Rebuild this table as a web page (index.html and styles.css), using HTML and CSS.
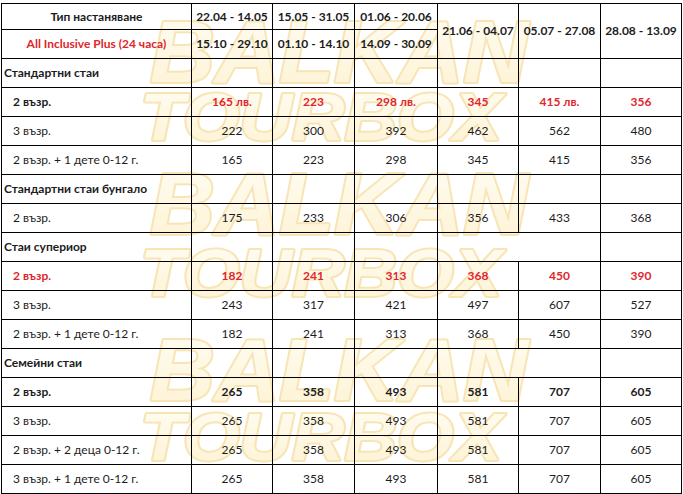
FILE: index.html
```html
<!DOCTYPE html>
<html lang="bg">
<head>
<meta charset="utf-8">
<title>Цени</title>
<link rel="stylesheet" href="styles.css">
</head>
<body>
<div class="sheet">
  <svg class="watermark" width="683" height="494" viewBox="0 0 683 494" aria-hidden="true">
    <defs>
      <linearGradient id="wm" x1="0" y1="0" x2="0" y2="1">
        <stop offset="0" stop-color="#fffdf4"/>
        <stop offset="1" stop-color="#fdf2d2"/>
      </linearGradient>
    </defs>
    <g class="wm-text">
      <text class="wm-big" x="150" y="82" textLength="378" lengthAdjust="spacingAndGlyphs">BALKAN</text>
      <text class="wm-small" x="140" y="140" textLength="362" lengthAdjust="spacingAndGlyphs">TOURBOX</text>
      <text class="wm-big" x="150" y="234" textLength="378" lengthAdjust="spacingAndGlyphs">BALKAN</text>
      <text class="wm-small" x="140" y="296" textLength="362" lengthAdjust="spacingAndGlyphs">TOURBOX</text>
      <text class="wm-big" x="150" y="400" textLength="378" lengthAdjust="spacingAndGlyphs">BALKAN</text>
      <text class="wm-small" x="140" y="460" textLength="362" lengthAdjust="spacingAndGlyphs">TOURBOX</text>
    </g>
  </svg>

  <table class="prices">
    <colgroup>
      <col class="c-label">
      <col class="c-81">
      <col class="c-82">
      <col class="c-83">
      <col class="c-81">
      <col class="c-82">
      <col class="c-81">
    </colgroup>
    <tr class="head-1">
      <th class="head-label">Тип настаняване</th>
      <th>22.04 - 14.05</th>
      <th>15.05 - 31.05</th>
      <th>01.06 - 20.06</th>
      <th rowspan="2">21.06 - 04.07</th>
      <th rowspan="2">05.07 - 27.08</th>
      <th rowspan="2">28.08 - 13.09</th>
    </tr>
    <tr>
      <th class="head-label red">All Inclusive Plus (24 часа)</th>
      <th>15.10 - 29.10</th>
      <th>01.10 - 14.10</th>
      <th>14.09 - 30.09</th>
    </tr>

    <tr class="section">
      <td class="sec-label">Стандартни стаи</td><td></td><td></td><td></td><td></td><td></td><td></td>
    </tr>
    <tr class="hl-red">
      <td class="sub-label bold">2 възр.</td><td>165 лв.</td><td>223</td><td>298 лв.</td><td>345</td><td>415 лв.</td><td>356</td>
    </tr>
    <tr>
      <td class="sub-label">3 възр.</td><td>222</td><td>300</td><td>392</td><td>462</td><td>562</td><td>480</td>
    </tr>
    <tr>
      <td class="sub-label">2 възр. + 1 дете 0-12 г.</td><td>165</td><td>223</td><td>298</td><td>345</td><td>415</td><td>356</td>
    </tr>

    <tr class="section">
      <td class="sec-label">Стандартни стаи бунгало</td><td></td><td></td><td></td><td></td><td></td><td></td>
    </tr>
    <tr>
      <td class="sub-label">2 възр.</td><td>175</td><td>233</td><td>306</td><td>356</td><td>433</td><td>368</td>
    </tr>

    <tr class="section">
      <td class="sec-label">Стаи супериор</td><td></td><td></td><td></td><td colspan="2"></td><td></td>
    </tr>
    <tr class="hl-red all-red">
      <td class="sub-label">2 възр.</td><td>182</td><td>241</td><td>313</td><td>368</td><td>450</td><td>390</td>
    </tr>
    <tr>
      <td class="sub-label">3 възр.</td><td>243</td><td>317</td><td>421</td><td>497</td><td>607</td><td>527</td>
    </tr>
    <tr>
      <td class="sub-label">2 възр. + 1 дете 0-12 г.</td><td>182</td><td>241</td><td>313</td><td>368</td><td>450</td><td>390</td>
    </tr>

    <tr class="section">
      <td class="sec-label">Семейни стаи</td><td></td><td></td><td></td><td colspan="2"></td><td></td>
    </tr>
    <tr class="hl-bold">
      <td class="sub-label">2 възр.</td><td>265</td><td>358</td><td>493</td><td>581</td><td>707</td><td>605</td>
    </tr>
    <tr>
      <td class="sub-label">3 възр.</td><td>265</td><td>358</td><td>493</td><td>581</td><td>707</td><td>605</td>
    </tr>
    <tr>
      <td class="sub-label">2 възр. + 2 деца 0-12 г.</td><td>265</td><td>358</td><td>493</td><td>581</td><td>707</td><td>605</td>
    </tr>
    <tr>
      <td class="sub-label">3 възр. + 1 дете 0-12 г.</td><td>265</td><td>358</td><td>493</td><td>581</td><td>707</td><td>605</td>
    </tr>
  </table>
</div>
</body>
</html>
```

FILE: styles.css
```css
* {
  box-sizing: border-box;
}

html,
body {
  margin: 0;
  padding: 0;
  background: #ffffff;
}

body {
  width: 683px;
  height: 494px;
  overflow: hidden;
  font-family: "Lato", "Open Sans", "DejaVu Sans", sans-serif;
  font-size: 12px;
  color: #1c1c1c;
}

.sheet {
  position: relative;
  width: 683px;
  height: 494px;
  padding: 3px 0 0 1px;
}

.watermark {
  position: absolute;
  left: 0;
  top: 0;
  z-index: 0;
}

.wm-text text {
  font-family: "Liberation Sans", "DejaVu Sans", sans-serif;
  font-weight: 700;
  font-style: italic;
  fill: url(#wm);
  stroke: #f8e5b6;
  stroke-width: 4;
  stroke-linejoin: round;
  paint-order: stroke;
}

.wm-big {
  font-size: 88px;
}

.wm-small {
  font-size: 66px;
}

.prices {
  position: relative;
  z-index: 1;
  border-collapse: collapse;
  table-layout: fixed;
  width: 681px;
}

.c-label { width: 190px; }
.c-81 { width: 81px; }
.c-82 { width: 82px; }
.c-83 { width: 83px; }

.prices th,
.prices td {
  border: 1px solid #000;
  height: 29px;
  padding: 0;
  text-align: center;
  vertical-align: middle;
  white-space: nowrap;
  line-height: 14px;
}

.prices th {
  font-weight: 700;
  color: #1c1c1c;
}

.prices .head-1 th {
  height: 26px;
}

.red,
.prices th.red {
  color: #e0262d;
}

.prices td.sec-label {
  text-align: left;
  padding-left: 2px;
  font-weight: 700;
}

.prices td.sub-label {
  text-align: left;
  padding-left: 11px;
}

.bold {
  font-weight: 700;
}

.hl-red td {
  color: #e0262d;
  font-weight: 700;
}

.hl-red td.sub-label {
  color: #1c1c1c;
}

.hl-red.all-red td.sub-label {
  color: #e0262d;
}

.hl-bold td {
  font-weight: 700;
}
```
